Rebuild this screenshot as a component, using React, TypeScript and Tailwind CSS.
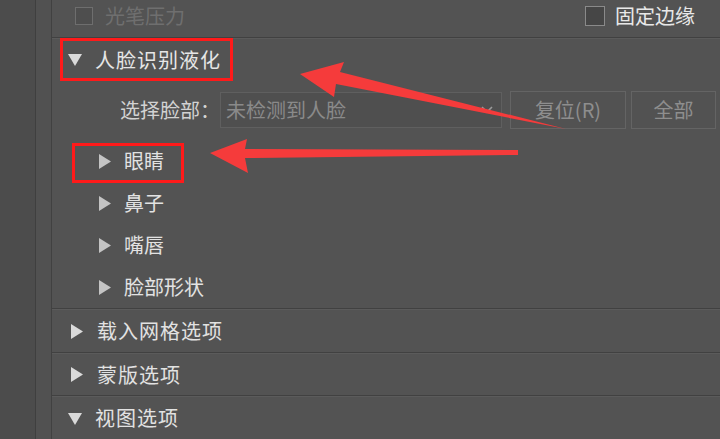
import React from "react";

const font = { fontFamily: '"Noto Sans CJK SC", "Noto Sans", sans-serif' };

function Tri({ open, dim }: { open?: boolean; dim?: boolean }) {
  const fill = dim ? "#c4c4c4" : "#dadada";
  return (
    <svg width="14" height="15" viewBox="0 0 14 15" className="shrink-0">
      {open ? (
        <polygon points="0,2 14,2 7,14" fill={fill} />
      ) : (
        <polygon points="1,0 13,7.5 1,15" fill={fill} />
      )}
    </svg>
  );
}

function Divider() {
  return (
    <div className="w-full">
      <div className="h-px bg-[#414141]" />
      <div className="h-px bg-[#5b5b5b]" />
    </div>
  );
}

const faceParts = ["眼睛", "鼻子", "嘴唇", "脸部形状"];

export default function App() {
  return (
    <div
      className="relative w-[720px] h-[439px] overflow-hidden flex bg-[#535353] text-[20px] leading-none"
      style={font}
    >
      {/* left strips */}
      <div className="w-[35px] bg-[#4c4c4c]" />
      <div className="w-px bg-[#3f3f3f]" />
      <div className="w-[15px] bg-[#515151]" />
      <div className="w-px bg-[#414141]" />

      {/* panel */}
      <div className="flex-1 flex flex-col">
        <div className="h-[37px] flex items-center pl-[23px] pr-[25px] pb-[5px]">
          <div className="w-[18px] h-[18px] border border-[#6e6e6e] bg-[#4e4e4e]" />
          <span className="ml-[12px] text-[#6f6f6f]">光笔压力</span>
          <div className="flex-1" />
          <div className="w-[20px] h-[20px] border border-[#8a8a8a] bg-[#464646]" />
          <span className="ml-[10px] text-[#e8e8e8]">固定边缘</span>
        </div>
        <Divider />

        {/* face-aware liquify */}
        <div className="h-[43px] flex items-center pl-[16px] gap-[13px] text-[#e6e6e6]">
          <Tri open />
          <span className="tracking-[1px]">人脸识别液化</span>
        </div>
        <div className="mt-[10px] h-[37px] flex items-center">
          <span className="w-[168px] text-right text-[#d2d2d2]">选择脸部：</span>
          <div className="w-[282px] h-[36px] flex items-center border border-[#5f5f5f] bg-[#4f4f4f] pl-[5px] pr-[8px] text-[#8a8a8a]">
            <span className="flex-1">未检测到人脸</span>
            <svg width="12" height="8" viewBox="0 0 12 8">
              <polyline points="1,1 6,6 11,1" fill="none" stroke="#9a9a9a" strokeWidth="1.6" />
            </svg>
          </div>
          <div className="ml-[8px] w-[116px] h-[38px] border border-[#646464] bg-[#525252] flex items-center justify-center text-[#8e8e8e]">
            复位(R)
          </div>
          <div className="ml-[5px] w-[85px] h-[38px] border border-[#646464] bg-[#525252] flex items-center justify-center text-[#8e8e8e]">
            全部
          </div>
        </div>
        <div className="mt-[12px] flex flex-col">
          {faceParts.map((p) => (
            <div key={p} className="h-[42px] flex items-center pl-[46px] gap-[12px] text-[#e2e2e2]">
              <Tri dim />
              <span>{p}</span>
            </div>
          ))}
        </div>
        <Divider />

        <div className="h-[42px] flex items-center pl-[18px] gap-[13px] text-[#e2e2e2]">
          <Tri />
          <span className="tracking-[1px]">载入网格选项</span>
        </div>
        <Divider />
        <div className="h-[42px] flex items-center pl-[18px] gap-[13px] text-[#e2e2e2]">
          <Tri />
          <span className="tracking-[1px]">蒙版选项</span>
        </div>
        <Divider />
        <div className="h-[42px] flex items-center pl-[16px] gap-[13px] text-[#e2e2e2]">
          <Tri open />
          <span className="tracking-[1px]">视图选项</span>
        </div>
      </div>

      {/* annotations */}
      <div className="absolute left-[60px] top-[38px] w-[173px] h-[43px] border-[3px] border-[#ff1a1a]" />
      <div className="absolute left-[72px] top-[143px] w-[112px] h-[40px] border-[3px] border-[#ff1a1a]" />
      <svg className="absolute left-0 top-0" width="720" height="439" viewBox="0 0 720 439">
        <polygon points="300,74 344,62 340,72 566,129 336,84 334,97" fill="#f53b3b" />
        <polygon points="210,153 247,139 245,149 518,150 518,155 245,158 248,173" fill="#f53b3b" />
      </svg>
    </div>
  );
}
